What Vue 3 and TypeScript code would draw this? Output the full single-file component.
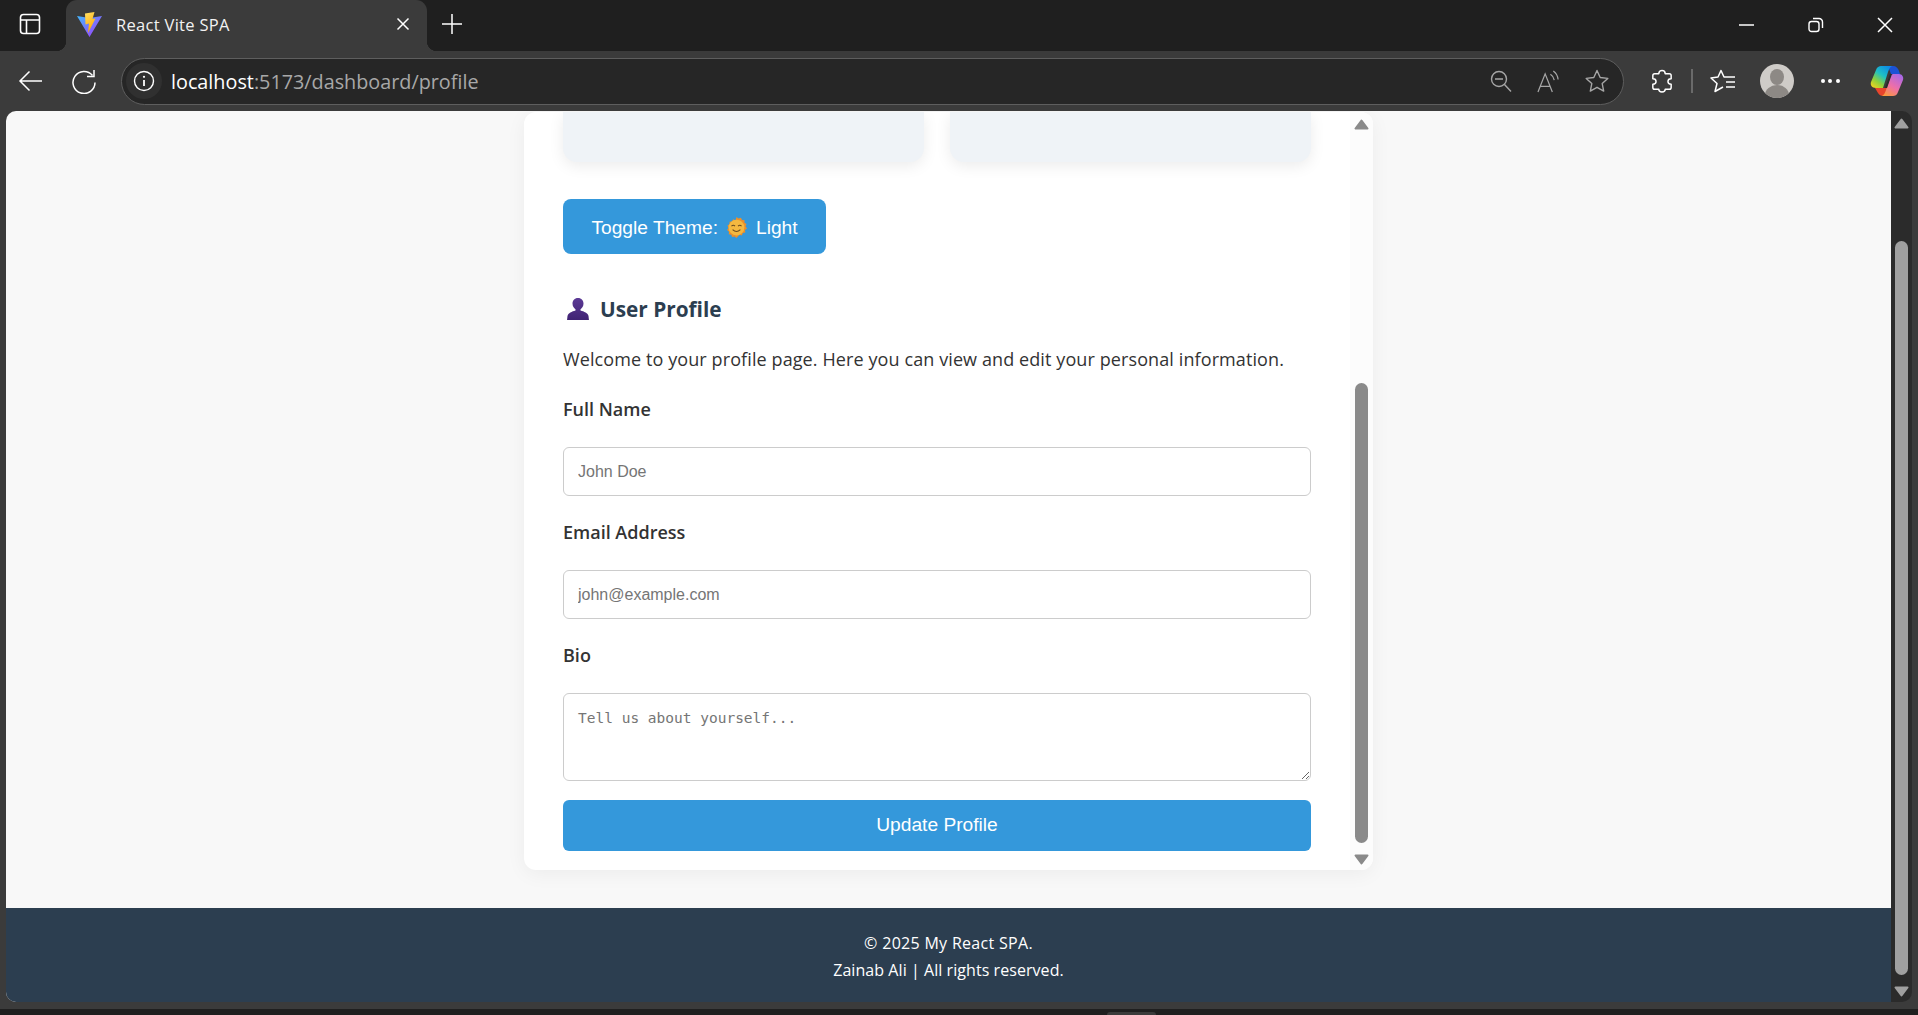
<script setup lang="ts">
const fields = [
  { label: 'Full Name', placeholder: 'John Doe', type: 'text' },
  { label: 'Email Address', placeholder: 'john@example.com', type: 'email' },
]
</script>

<template>
  <div class="window">
    <div class="tabstrip">
      <div class="tab-toggle">
        <svg width="22" height="22" viewBox="0 0 22 22" fill="none" stroke="#fff" stroke-width="1.6"><rect x="1.500" y="1.500" width="19" height="19" rx="3"/><path d="M1.500 7h19M7.500 7v13.500"/></svg>
      </div>
      <div class="tab">
        <svg class="favicon" width="25" height="25" viewBox="0 0 25 25">
          <defs>
            <linearGradient id="vg1" x1="0" y1="0" x2="1" y2="1"><stop offset="0" stop-color="#41b8ff"/><stop offset="1" stop-color="#a933fb"/></linearGradient>
            <linearGradient id="vg2" x1="0" y1="0" x2="0.4" y2="1"><stop offset="0" stop-color="#ffe066"/><stop offset="1" stop-color="#ffa800"/></linearGradient>
          </defs>
          <path d="M0 4l12.500 2L25 4 12.500 25z" fill="url(#vg1)"/>
          <path d="M8 1.500L17.500 0l-2 7 3-.5L11 21l1-9.500-3.500 1z" fill="url(#vg2)"/>
        </svg>
        <span class="tab-title">React Vite SPA</span>
        <svg class="tab-close" width="14" height="14" viewBox="0 0 14 14" stroke="#fff" stroke-width="1.500"><path d="M1.500 1.500l11 11M12.500 1.500l-11 11"/></svg>
      </div>
      <svg class="new-tab" width="22" height="22" viewBox="0 0 22 22" stroke="#fff" stroke-width="1.500"><path d="M11 1v20M1 11h20"/></svg>
      <div class="win-controls">
        <svg width="16" height="16" viewBox="0 0 16 16" stroke="#fff" stroke-width="1.500"><path d="M0 8h15"/></svg>
        <svg width="16" height="16" viewBox="0 0 16 16" fill="none" stroke="#fff" stroke-width="1.400"><rect x="1" y="4.500" width="10" height="10" rx="2.500"/><path d="M5 1.500h6a3.500 3.500 0 0 1 3.500 3.500v6"/></svg>
        <svg width="16" height="16" viewBox="0 0 16 16" stroke="#fff" stroke-width="1.500"><path d="M1 1l14 14M15 1L1 15"/></svg>
      </div>
    </div>

    <div class="toolbar">
      <svg class="nav-back" width="25" height="24" viewBox="0 0 25 24" fill="none" stroke="#fff" stroke-width="1.500"><path d="M24 12H2M11.500 2.500L2 12l9.500 9.500"/></svg>
      <svg class="nav-reload" width="24" height="25" viewBox="0 0 24 25" fill="none" stroke="#fff" stroke-width="1.500"><path d="M20.500 6.500A11 11 0 1 0 23 13.500"/><path d="M22 1v6.500h-7"/></svg>
      <div class="omnibox">
        <div class="site-info">
          <svg width="22" height="22" viewBox="0 0 22 22" fill="none" stroke="#fff" stroke-width="1.400"><circle cx="11" cy="11" r="9.500"/><path d="M11 10v6" stroke-width="1.800"/><circle cx="11" cy="6.800" r="1.100" fill="#fff" stroke="none"/></svg>
        </div>
        <span class="url"><span class="url-host">localhost</span>:5173/dashboard/profile</span>
        <div class="omni-icons">
          <svg width="22" height="23" viewBox="0 0 22 23" fill="none" stroke="#a6a6a6" stroke-width="1.400"><circle cx="9" cy="9" r="7.500"/><path d="M5 9h8M14.500 14.500l6.500 7"/></svg>
          <svg width="23" height="23" viewBox="0 0 24 24" fill="none" stroke="#a6a6a6" stroke-width="1.300"><path d="M1 23L8.500 4 16 23M3.800 17h9.500M14 4.500a9 9 0 0 1 4 6M17 1a12 12 0 0 1 5 9"/></svg>
          <svg width="24" height="24" viewBox="0 0 24 24" fill="none" stroke="#a6a6a6" stroke-width="1.400"><path d="M12 1.500l3.200 7 7.600.9-5.600 5.200 1.500 7.500-6.700-3.800-6.700 3.800 1.500-7.500L1.200 9.400l7.600-.9z" stroke-linejoin="round"/></svg>
        </div>
      </div>
      <svg class="tool-ext" width="22" height="24" viewBox="0 0 24 26" fill="none" stroke="#fff" stroke-width="1.600" stroke-linejoin="round"><path d="M8.500 5C8.500 3 10 1.500 12 1.500S15.500 3 15.500 5H20a2 2 0 0 1 2 2v3.500c-2 0-3.500 1-3.500 3s1.500 3 3.500 3V20a2 2 0 0 1-2 2h-4.500c0 1.700-1.500 3-3.500 3s-3.500-1.300-3.500-3H4a2 2 0 0 1-2-2v-3.500c2 0 3.500-1 3.500-3s-1.500-3-3.500-3V7a2 2 0 0 1 2-2z"/></svg>
      <div class="tool-sep"></div>
      <svg class="tool-fav" width="26" height="24" viewBox="0 0 26 24" fill="none" stroke="#fff" stroke-width="1.500" stroke-linejoin="round"><path d="M25 8H14l-3-6.500L8 8l-7 1 6 5.500-2 8 8-4.500"/><path d="M16 13h9M16 18h9"/></svg>
      <div class="avatar">
        <span class="avatar-head"></span>
        <span class="avatar-body"></span>
      </div>
      <div class="tool-more"><span></span><span></span><span></span></div>
      <svg class="copilot" width="34" height="32" viewBox="0 0 34 32">
        <defs>
          <linearGradient id="cp1" x1="0.8" y1="0" x2="0.1" y2="1"><stop offset="0" stop-color="#0d8be6"/><stop offset=".4" stop-color="#1fc1c4"/><stop offset=".7" stop-color="#8fd03c"/><stop offset="1" stop-color="#f6d21f"/></linearGradient>
          <linearGradient id="cp2" x1="0.8" y1="0" x2="0.2" y2="1"><stop offset="0" stop-color="#a868e8"/><stop offset=".55" stop-color="#ee6fa8"/><stop offset="1" stop-color="#fb9a3c"/></linearGradient>
        </defs>
        <path d="M18 1h5c3 0 5 2 6 5l1 3h-9z" fill="#1c52d6"/>
        <path d="M5 23l3 5c1 2 3 3 5 3h2l3-8z" fill="#e8452c"/>
        <path d="M11 1h11c-2 1-3 3-4 6l-5 16H6c-4 0-6-3-5-6L6 5c1-3 3-4 5-4z" fill="url(#cp1)"/>
        <path d="M23 9h6c3 0 5 3 4 6l-5 12c-1 3-3 4-5 4H12c2-1 3-3 4-6l5-15z" fill="url(#cp2)"/>
        <path d="M15 23l5-14h2l-5 14z" fill="#2b2b2b"/>
      </svg>
    </div>

    <div class="browser-frame">
      <div class="viewport">
        <main class="main">
          <section class="card">
            <div class="card-scroll">
              <div class="stat-row">
                <div class="stat"></div>
                <div class="stat"></div>
              </div>
              <button class="theme-btn" type="button">
                Toggle Theme:
                <svg class="sun" width="21" height="21" viewBox="0 0 20 20">
                  <path d="M10 0l1.900 1.500 2.300-.8 1.100 2.100 2.400.2-.1 2.400 2 1.300-1 2.200 1.400 2-1.900 1.500.3 2.400-2.400.4-.8 2.300-2.300-.6L10 20l-1.900-1.500-2.300.6-.8-2.300-2.400-.4.3-2.400L1 12.400l1.400-2-1-2.200 2-1.300-.1-2.400 2.400-.2 1.100-2.100 2.300.8z" fill="#ec8f2a"/>
                  <circle cx="10" cy="10" r="7.500" fill="#f4b840"/>
                  <path d="M5.200 8.700q1.800-1.600 3.400 0M11.400 8.700q1.800-1.600 3.400 0M6.300 12q3.700 3.700 7.400 0" fill="none" stroke="#6b4a1e" stroke-width="1"/>
                </svg>
                Light
              </button>
              <h2 class="title">
                <svg class="bust" width="22" height="22" viewBox="0 0 22 22"><defs><linearGradient id="bs" x1="0" y1="0" x2="0" y2="1"><stop offset="0" stop-color="#5c3a96"/><stop offset="1" stop-color="#3f2272"/></linearGradient></defs><path d="M11 0c3.500 0 5.500 2.500 5.500 5.500 0 2.800-1.500 4.700-3 5.700v1.300c3.500 1 7.500 2.500 8 5.500l.5 4.500H0l.5-4.500c.5-3 4.500-4.500 8-5.500v-1.300c-1.500-1-3-2.900-3-5.700C5.500 2.500 7.500 0 11 0z" fill="url(#bs)"/></svg>
                User Profile
              </h2>
              <p class="intro">Welcome to your profile page. Here you can view and edit your personal information.</p>
              <form class="form" @submit.prevent>
                <div v-for="f in fields" :key="f.label" class="field">
                  <label class="label">{{ f.label }}</label>
                  <input class="input" :type="f.type" :placeholder="f.placeholder" />
                </div>
                <div class="field">
                  <label class="label">Bio</label>
                  <textarea class="input textarea" placeholder="Tell us about yourself..."></textarea>
                </div>
                <button class="submit" type="submit">Update Profile</button>
              </form>
            </div>
            <div class="card-bar">
              <svg class="arr-up" width="15" height="11" viewBox="0 0 15 11"><path d="M7.500 1.500L1.500 9.500h12z" fill="#8a8a8a" stroke="#8a8a8a" stroke-width="2" stroke-linejoin="round"/></svg>
              <div class="card-thumb"></div>
              <svg class="arr-down" width="15" height="11" viewBox="0 0 15 11"><path d="M7.500 9.500L1.500 1.500h12z" fill="#8a8a8a" stroke="#8a8a8a" stroke-width="2" stroke-linejoin="round"/></svg>
            </div>
          </section>
        </main>
        <footer class="footer">
          <p class="foot-a">© 2025 My React SPA.</p>
          <p class="foot-b">Zainab Ali | All rights reserved.</p>
        </footer>
      </div>
      <div class="page-bar">
        <svg class="parr-up" width="15" height="11" viewBox="0 0 15 11"><path d="M7.500 1.500L1.500 9.500h12z" fill="#a0a0a0" stroke="#a0a0a0" stroke-width="2" stroke-linejoin="round"/></svg>
        <div class="page-thumb"></div>
        <svg class="parr-down" width="15" height="11" viewBox="0 0 15 11"><path d="M7.500 9.500L1.500 1.500h12z" fill="#a0a0a0" stroke="#a0a0a0" stroke-width="2" stroke-linejoin="round"/></svg>
      </div>
    </div>
    <div class="status-gap"></div>
    <div class="status-strip"><span class="taskbar-handle"></span></div>
  </div>
</template>

<style>
html, body { margin: 0; padding: 0; overflow: hidden; }
</style>

<style scoped>
.window { width: 1918px; height: 1015px; display: flex; flex-direction: column; background: #3b3b3b; overflow: hidden; font-family: "Open Sans", "Noto Sans", sans-serif; }
.tabstrip { height: 51px; flex: none; background: #1f1f1f; display: flex; align-items: center; }
.tab-toggle { width: 60px; margin-right: 6px; flex: none; display: flex; justify-content: center; padding-bottom: 3px; }
.tab { width: 361px; height: 51px; box-sizing: border-box; background: #3b3b3b; border-radius: 11px 11px 0 0; display: flex; align-items: center; padding: 0 17px 3px 11px; position: relative; flex: none; }
.tab::before, .tab::after { content: ""; position: absolute; bottom: 0; width: 10px; height: 10px; }
.tab::before { left: -10px; background: radial-gradient(circle at 0 0, transparent 10px, #3b3b3b 10.500px); }
.tab::after { right: -10px; background: radial-gradient(circle at 100% 0, transparent 10px, #3b3b3b 10.500px); }
.favicon { flex: none; }
.tab-title { color: #f2f2f2; font-size: 16.500px; letter-spacing: .3px; margin-left: 14px; flex: 1; }
.new-tab { margin-left: 14px; margin-bottom: 3px; flex: none; }
.win-controls { margin-left: auto; display: flex; gap: 53px; padding-right: 25px; padding-bottom: 2px; }
.toolbar { height: 60px; flex: none; background: #3b3b3b; display: flex; align-items: center; }
.nav-back { margin-left: 18px; flex: none; }
.nav-reload { margin-left: 29px; flex: none; }
.omnibox { width: 1503px; height: 47px; box-sizing: border-box; margin-left: 25px; border: 1.500px solid #5e5e5e; border-radius: 24px; background: #262626; display: flex; align-items: center; flex: none; }
.site-info { width: 36px; height: 36px; margin-left: 4px; border-radius: 50%; background: #303030; display: flex; align-items: center; justify-content: center; flex: none; }
.url { margin-left: 9px; font-size: 19.800px; color: #a8a8a8; }
.url-host { color: #fff; }
.omni-icons { margin-left: auto; display: flex; gap: 25px; padding-right: 14px; align-items: center; }
.tool-ext { margin-left: 27px; flex: none; }
.tool-sep { width: 1.500px; height: 24px; background: #6a6a6a; margin-left: 18px; flex: none; }
.tool-fav { margin-left: 17px; flex: none; }
.avatar { width: 34px; height: 34px; border-radius: 50%; background: #cfccc8; margin-left: 24px; position: relative; overflow: hidden; flex: none; }
.avatar-head { position: absolute; left: 10px; top: 5px; width: 14px; height: 16px; border-radius: 50%; background: #8d8985; }
.avatar-body { position: absolute; left: 5px; top: 21px; width: 24px; height: 20px; border-radius: 50%; background: #8d8985; }
.tool-more { display: flex; gap: 3.500px; margin-left: 27px; flex: none; }
.tool-more span { width: 4px; height: 4px; border-radius: 50%; background: #fff; }
.copilot { margin-left: 30px; flex: none; }

.browser-frame { height: 891px; flex: none; display: flex; padding-left: 6px; }
.viewport { width: 1885px; flex: none; background: #f8f8f8; display: flex; flex-direction: column; border-radius: 10px 0 0 10px; overflow: hidden; }
.main { height: 797px; flex: none; display: flex; justify-content: center; padding-top: 1px; box-sizing: border-box; }
.card { width: 849px; height: 758px; background: #fff; border-radius: 12px; box-shadow: 0 4px 20px rgba(0, 0, 0, .05); display: flex; overflow: hidden; flex: none; }
.card-scroll { flex: 1; padding: 0 39px; box-sizing: border-box; min-width: 0; }
.stat-row { display: flex; gap: 26px; }
.stat { flex: 1; height: 50px; background: #eff3f7; border-radius: 0 0 14px 14px; box-shadow: 0 4px 15px rgba(0, 0, 0, .08); }
.theme-btn { display: flex; align-items: center; gap: 8.500px; margin-top: 37px; height: 55px; width: 263px; justify-content: center; background: #3498db; border: none; border-radius: 8px; color: #fff; font-family: "Liberation Sans", Arial, sans-serif; font-size: 19.200px; padding: 2px 0 0; box-sizing: border-box; }
.sun { flex: none; }
.title { display: flex; align-items: center; gap: 11px; margin: 40px 0 0; padding-left: 4px; font-size: 20.800px; font-weight: 700; color: #2c3e50; height: 30px; }
.bust { flex: none; }
.intro { margin: 23px 0 0; font-size: 18px; letter-spacing: .1px; color: #333; line-height: 24px; white-space: nowrap; }
.form { margin-top: 26px; display: flex; flex-direction: column; }
.field { display: flex; flex-direction: column; }
.label { font-size: 18px; font-weight: 600; color: #333; height: 24px; line-height: 24px; margin-bottom: 26px; }
.input { box-sizing: border-box; width: 100%; height: 49px; border: 1px solid #ccc; border-radius: 6px; padding: 0 14px; font-family: "Liberation Sans", Arial, sans-serif; font-size: 16px; color: #333; background: #fff; margin-bottom: 24px; }
.input::placeholder { color: #757575; }
.textarea { height: 88px; padding: 16px 14px 12px; font-family: "DejaVu Sans Mono", "Liberation Mono", monospace; font-size: 14.500px; margin-bottom: 19px; resize: vertical; display: block; }
.submit { height: 51px; border: none; border-radius: 6px; background: #3498db; color: #fff; font-family: "Liberation Sans", Arial, sans-serif; font-size: 19.200px; padding: 0 0 2px; }

.card-bar { width: 23px; flex: none; display: flex; flex-direction: column; align-items: center; background: #fcfcfc; }
.arr-up { margin-top: 7px; flex: none; }
.card-thumb { width: 13px; height: 460px; margin-top: 253px; border-radius: 7px; background: #8a8a8a; flex: none; }
.arr-down { margin-top: 11px; flex: none; }
.footer { height: 94px; flex: none; background: #2c3e50; color: #fff; text-align: center; font-size: 16px; padding-top: 22px; box-sizing: border-box; }
.footer p { margin: 0; line-height: 27px; }
.foot-a { letter-spacing: .3px; }
.foot-b { letter-spacing: .06px; }
.page-bar { width: 21px; flex: none; background: #2b2b2b; display: flex; flex-direction: column; align-items: center; border-radius: 0 10px 10px 0; }
.parr-up { margin-top: 7px; flex: none; }
.page-thumb { width: 13px; height: 734px; margin-top: 112px; border-radius: 7px; background: #a0a0a0; flex: none; }
.parr-down { margin-top: 11px; flex: none; }
.status-gap { height: 7px; flex: none; }
.status-strip { flex: 1; background: #1f1f1f; position: relative; }
.taskbar-handle { position: absolute; left: 1107px; bottom: 0; width: 49px; height: 3px; border-radius: 3px 3px 0 0; background: #3b3b3b; }
</style>
